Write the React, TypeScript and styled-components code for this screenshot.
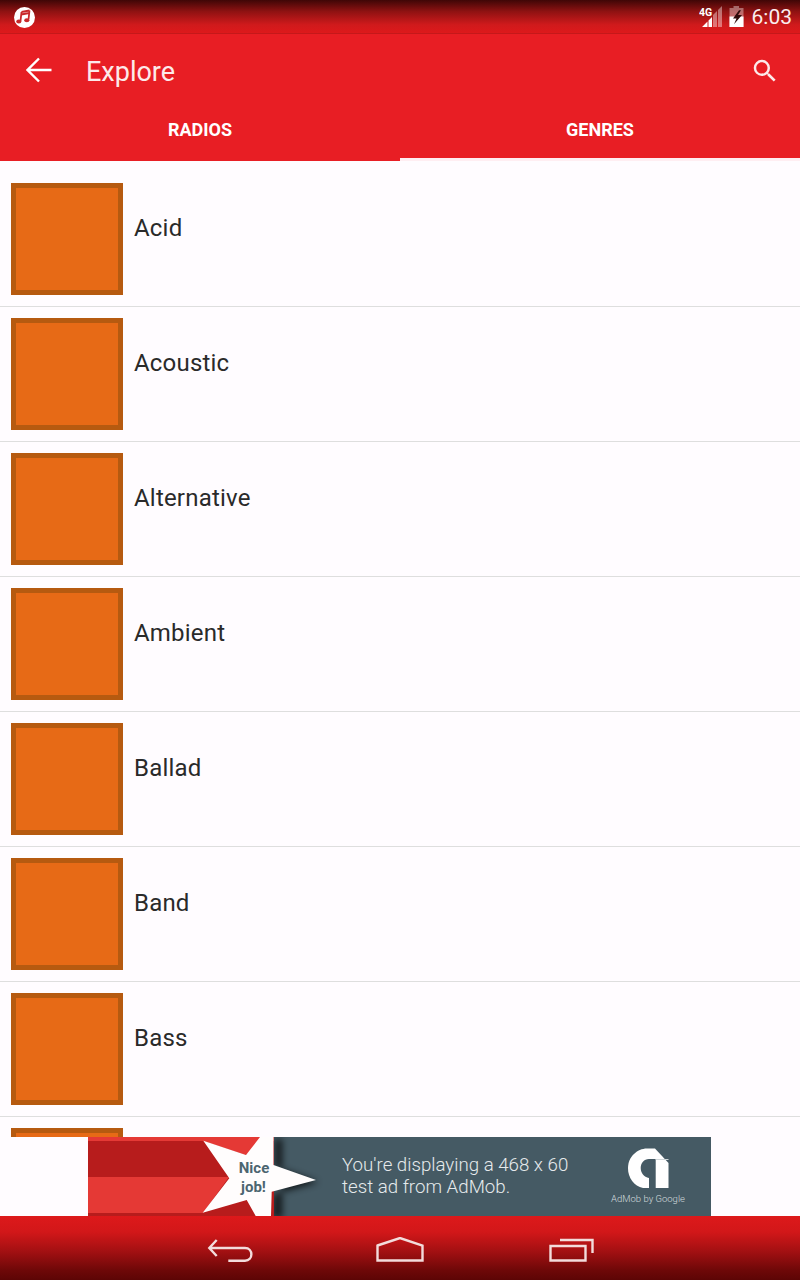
import React from 'react';
import styled, { createGlobalStyle } from 'styled-components';

const GlobalStyle = createGlobalStyle`
  html, body {
    margin: 0;
    padding: 0;
    background: #fffcff;
  }
`;

const Screen = styled.div`
  width: 800px;
  height: 1280px;
  display: flex;
  flex-direction: column;
  overflow: hidden;
  background: #fffcff;
  font-family: Roboto, "Liberation Sans", sans-serif;
`;

const StatusBar = styled.div`
  height: 34px;
  box-sizing: border-box;
  flex-shrink: 0;
  display: flex;
  align-items: center;
  justify-content: space-between;
  padding: 0 8px 0 13px;
  background: linear-gradient(180deg, #3f0606 0%, #8f1212 35%, #d01a1c 75%, #dd191b 100%);
  border-bottom: 1px solid #c5181a;
`;

const MusicBadge = styled.svg`
  margin: 2px 0 0 1px;
`;

const StatusRight = styled.div`
  display: flex;
  align-items: center;
`;

const SignalIcon = styled.svg`
  margin-bottom: 4px;
`;

const BatteryIcon = styled.svg`
  margin: 0 0 1px 6px;
`;

const Clock = styled.span`
  margin-left: 8px;
  font-size: 21px;
  color: #fbeeee;
  line-height: 34px;
`;

const AppBar = styled.header`
  flex-shrink: 0;
  background: #e81e24;
`;

const Toolbar = styled.div`
  height: 74px;
  display: flex;
  align-items: center;
  padding: 0 20px 0 26px;
`;

const BackButton = styled.div`
  width: 26px;
  height: 26px;
  display: flex;
  margin: 0 34px 3px 0;
`;

const Title = styled.h1`
  flex: 1;
  margin: 2px 0 0;
  font-size: 27px;
  font-weight: 400;
  color: #fdeaea;
`;

const Tabs = styled.div`
  display: flex;
  height: 53px;
`;

const Tab = styled.div<{ $active?: boolean }>`
  flex: 1;
  box-sizing: border-box;
  display: flex;
  align-items: center;
  justify-content: center;
  padding-bottom: ${(p) => (p.$active ? '7px' : '10px')};
  font-size: 18px;
  font-weight: 700;
  color: #fff;
  border-bottom: ${(p) => (p.$active ? '3px solid #ffeef2' : 'none')};
`;

const GenreList = styled.div`
  flex: 1;
  min-height: 0;
  overflow: hidden;
  padding-top: 11px;
`;

const GenreRow = styled.div`
  display: flex;
  align-items: flex-start;
  padding: 11px;
  border-bottom: 1px solid #dedede;
`;

const Thumb = styled.div`
  width: 112px;
  height: 112px;
  box-sizing: border-box;
  flex-shrink: 0;
  background: #e76a16;
  border: 5px solid #b65a10;
`;

const GenreName = styled.span`
  margin: 31px 0 0 11px;
  font-size: 24px;
  line-height: 28px;
  letter-spacing: 0.2px;
  color: #2a2a2a;
`;

const AdStrip = styled.div`
  flex-shrink: 0;
  height: 79px;
  display: flex;
  justify-content: center;
  padding-right: 1px;
  background: #fffcff;
`;

const AdBanner = styled.div`
  position: relative;
  width: 623px;
  height: 79px;
  box-sizing: border-box;
  display: flex;
  align-items: flex-start;
  padding-left: 254px;
  background: #455a64;
  overflow: hidden;
`;

const AdArt = styled.svg`
  position: absolute;
  left: 0;
  top: 0;
`;

const AdCopy = styled.div`
  width: 256px;
  margin-top: 17px;
  font-size: 18.7px;
  font-weight: 300;
  line-height: 22px;
  color: #e6eaec;
`;

const AdMobBrand = styled.div`
  width: 80px;
  margin-left: 10px;
  display: flex;
  flex-direction: column;
  align-items: center;
  padding-top: 11px;
`;

const AdMobText = styled.span`
  margin-top: 5px;
  font-size: 9.5px;
  font-weight: 300;
  white-space: nowrap;
  color: #d3dbde;
`;

const NavBar = styled.nav`
  flex-shrink: 0;
  height: 64px;
  display: flex;
  align-items: flex-start;
  padding: 21px 0 0 207px;
  gap: 123px;
  box-sizing: border-box;
  background: linear-gradient(180deg, #dd191b 0%, #d21719 25%, #a31012 55%, #6e0808 85%, #5c0505 100%);
`;

const genres = ['Acid', 'Acoustic', 'Alternative', 'Ambient', 'Ballad', 'Band', 'Bass'];

const App: React.FC = () => {
  return (
    <Screen>
      <GlobalStyle />
      <StatusBar>
        <MusicBadge width="21" height="21" viewBox="0 0 21 21">
          <circle cx="10.5" cy="10.5" r="10.5" fill="#fff" />
          <path d="M7.5 5 L6.5 14 M15.5 3.5 L14.5 12.5 M7.5 5 L15.5 3.5 M7.3 7.5 L15.2 6" stroke="#c9282a" strokeWidth="1.8" fill="none" />
          <ellipse cx="4.8" cy="14.6" rx="2.6" ry="2" fill="#c9282a" />
          <ellipse cx="12.8" cy="13.2" rx="2.6" ry="2" fill="#c9282a" />
        </MusicBadge>
        <StatusRight>
          <SignalIcon width="24" height="24" viewBox="0 0 24 24">
            <path d="M14 12 L18 8 V24 H14 Z M19 7 L23 3 V24 H19 Z" fill="#fff" opacity="0.4" />
            <path d="M3 24 L8.5 18.5 V24 Z M9.5 17.5 L13 14 V24 H9.5 Z" fill="#fff" />
            <text x="0" y="12.5" fontSize="10.5" fontWeight="700" fill="#fff" fontFamily="Roboto, sans-serif">4G</text>
          </SignalIcon>
          <BatteryIcon width="15" height="21" viewBox="0 0 15 22" preserveAspectRatio="none">
            <path d="M4.5 0 H10 V2 H14.5 V22 H0.5 V2 H4.5 Z" fill="#fff" opacity="0.38" />
            <path d="M0.5 11 H14.5 V22 H0.5 Z" fill="#fff" />
            <path d="M10 4.5 L4 13 H7.5 L5 19 L13 9.5 H9 L12 4.5 Z" fill="#2f0b0b" />
          </BatteryIcon>
          <Clock>6:03</Clock>
        </StatusRight>
      </StatusBar>

      <AppBar>
        <Toolbar>
          <BackButton>
            <svg width="26" height="26" viewBox="0 0 26 26">
              <path d="M25.5 13 H2 M13 1.5 L1.5 13 L13 24.5" stroke="#fff" strokeWidth="2.4" fill="none" />
            </svg>
          </BackButton>
          <Title>Explore</Title>
          <svg width="30" height="30" viewBox="0 0 24 24">
            <path
              d="M15.5 14h-.79l-.28-.27A6.471 6.471 0 0 0 16 9.5 6.5 6.5 0 1 0 9.5 16c1.61 0 3.09-.59 4.23-1.57l.27.28v.79l5 4.99L20.49 19l-4.99-5zm-6 0C7.01 14 5 11.99 5 9.5S7.01 5 9.5 5 14 7.01 14 9.5 11.99 14 9.5 14z"
              fill="#fdeaea"
            />
          </svg>
        </Toolbar>
        <Tabs>
          <Tab>RADIOS</Tab>
          <Tab $active>GENRES</Tab>
        </Tabs>
      </AppBar>

      <GenreList>
        {genres.map((name) => (
          <GenreRow key={name}>
            <Thumb />
            <GenreName>{name}</GenreName>
          </GenreRow>
        ))}
        <GenreRow>
          <Thumb />
        </GenreRow>
      </GenreList>

      <AdStrip>
        <AdBanner>
          <AdArt width="240" height="79" viewBox="0 0 240 79">
            <defs>
              <filter id="starShadow" x="-20%" y="-20%" width="140%" height="140%">
                <feGaussianBlur stdDeviation="3.5" />
              </filter>
              <clipPath id="slateOnly">
                <rect x="186" y="0" width="54" height="79" />
              </clipPath>
            </defs>
            <rect x="0" y="0" width="186" height="79" fill="#b71c1c" />
            <rect x="0" y="0" width="186" height="4" fill="#e53935" />
            <path d="M115 4 H172 L158 18 Z" fill="#e53935" />
            <path d="M0 40 H141 L115 76 H0 Z" fill="#e53935" />
            <g clipPath="url(#slateOnly)">
              <path
                d="M185 0 V28 L228 43 L184 55 L183 79 H192 V0 Z"
                transform="translate(2 2)"
                fill="#000"
                opacity="0.75"
                filter="url(#starShadow)"
              />
            </g>
            <path
              d="M115.3 3.7 L158 18 L172 0 H185.5 V28 L228 43 L183.7 54.7 L183 79 H167.7 L158.7 63 L114.7 75.7 L141.3 41.3 Z"
              fill="#fffdfd"
            />
            <text x="166" y="36" textAnchor="middle" fontSize="15" fontWeight="700" fill="#4c6570" fontFamily="Roboto, sans-serif">Nice</text>
            <text x="165.5" y="54.5" textAnchor="middle" fontSize="15" fontWeight="700" fill="#4c6570" fontFamily="Roboto, sans-serif">job!</text>
          </AdArt>
          <AdCopy>You're displaying a 468 x 60 test ad from AdMob.</AdCopy>
          <AdMobBrand>
            <svg width="41" height="40" viewBox="0 0 41 40">
              <path d="M19 0.5 H27 L40.5 15 V40 H15 C6 38 0 30 0 20 C0 9 9 0.5 19 0.5 Z" fill="#fff" />
              <path d="M27.7 11 H21 C16 11 12.7 15 12.7 20 C12.7 25 16 29 21 30 V40 H27.7 Z" fill="#455a64" />
              <path d="M27.7 11 H40.5 V12 H27.7 Z" fill="#cfd6d9" />
            </svg>
            <AdMobText>AdMob by Google</AdMobText>
          </AdMobBrand>
        </AdBanner>
      </AdStrip>

      <NavBar>
        <svg width="46" height="26" viewBox="0 0 46 26">
          <path d="M9.7 3 L2.3 11 L9.7 19 M2.3 11 H38 C46.5 11 46.5 23.7 38 23.7 H21.3" stroke="#f3dcdc" strokeWidth="2.4" fill="none" />
        </svg>
        <svg width="48" height="26" viewBox="0 0 48 26">
          <path d="M1.5 8.5 L24 1 L46.5 8.5 V23.5 H1.5 Z" stroke="#f3dcdc" strokeWidth="2.4" fill="none" />
        </svg>
        <svg width="48" height="26" viewBox="0 0 48 26">
          <path d="M3.5 9 H38.5 V23.5 H3.5 Z M13 3 H45.5 V16" stroke="#f3dcdc" strokeWidth="2.4" fill="none" />
        </svg>
      </NavBar>
    </Screen>
  );
};

export default App;
